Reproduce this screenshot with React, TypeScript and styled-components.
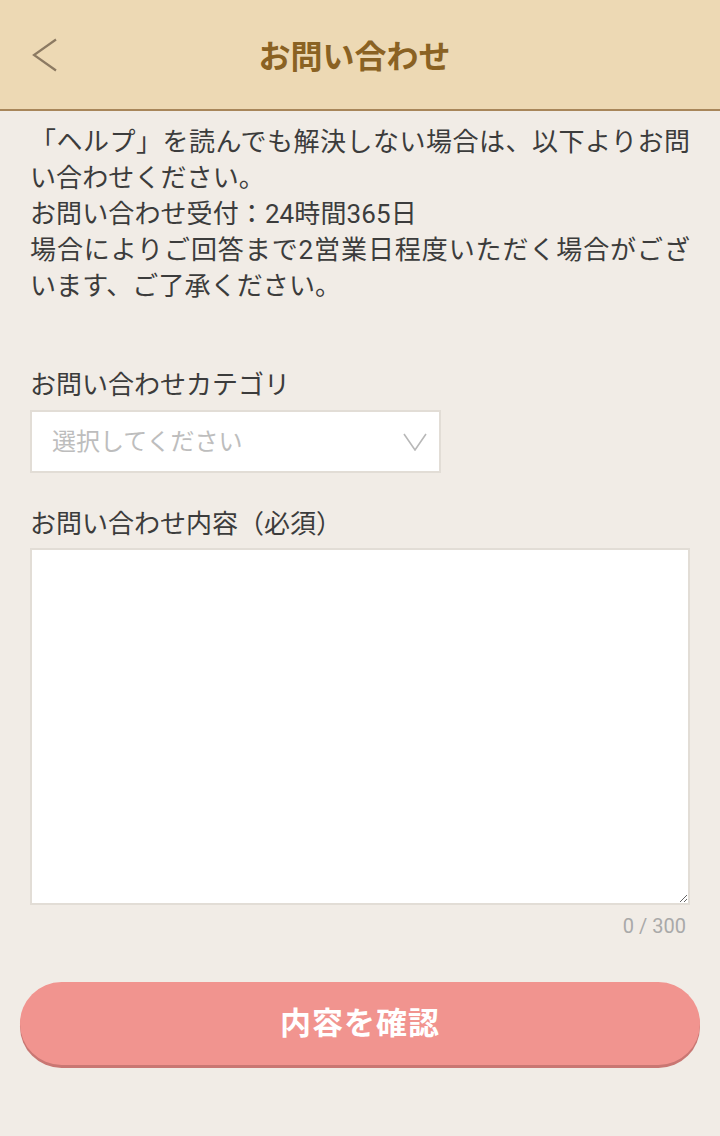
import { useState } from "react";
import { styled, createGlobalStyle } from "styled-components";

const COLOR = {
  bg: "#f1ece6",
  header: "#edd9b4",
  headerLine: "#a8865a",
  title: "#8a6223",
  text: "#3c3c3c",
  placeholder: "#bdbdbd",
  border: "#e2ddd6",
  counter: "#a9a9a9",
  button: "#f1948f",
  buttonShadow: "#c97773",
};

const FONT = `"Roboto", "Noto Sans CJK JP", sans-serif`;

const GlobalStyle = createGlobalStyle`
  html, body {
    margin: 0;
    padding: 0;
    background: ${COLOR.bg};
    font-family: ${FONT};
  }
  * {
    box-sizing: border-box;
  }
`;

const Page = styled.div`
  width: 720px;
  min-height: 1136px;
  background: ${COLOR.bg};
  display: flex;
  flex-direction: column;
`;

const Header = styled.header`
  height: 111px;
  background: ${COLOR.header};
  border-bottom: 2px solid ${COLOR.headerLine};
  display: grid;
  grid-template-columns: 90px 1fr 90px;
  align-items: center;
  .backButton {
    display: flex;
    align-items: center;
    padding-left: 32px;
    background: none;
    border: none;
    cursor: pointer;
    height: 100%;
  }
  .headerTitle {
    margin: 0;
    text-align: center;
    font-size: 32px;
    font-weight: 700;
    color: ${COLOR.title};
    padding: 0 11px 2px 0;
  }
`;

const Content = styled.main`
  padding: 13px 30px 0;
  display: flex;
  flex-direction: column;
`;

const Notice = styled.p`
  margin: 0;
  font-size: 26px;
  line-height: 36px;
  color: ${COLOR.text};
  text-align: justify;
  letter-spacing: 0.1px;
`;

const Label = styled.label<{ $top: number }>`
  display: block;
  margin-top: ${(p) => p.$top}px;
  font-size: 26px;
  line-height: 36px;
  color: ${COLOR.text};
`;

const SelectBox = styled.div`
  position: relative;
  margin-top: 7px;
  width: 411px;
  height: 63px;
  select {
    appearance: none;
    width: 100%;
    height: 100%;
    background: #fff;
    border: 2px solid ${COLOR.border};
    padding: 0 60px 0 20px;
    font-family: ${FONT};
    font-size: 24px;
    color: ${COLOR.placeholder};
    outline: none;
  }
  svg {
    position: absolute;
    right: 14px;
    top: 23px;
    pointer-events: none;
  }
`;

const TextArea = styled.textarea`
  margin-top: 6px;
  width: 660px;
  height: 357px;
  background: #fff;
  border: 2px solid ${COLOR.border};
  font-family: ${FONT};
  font-size: 24px;
  padding: 12px 16px;
  color: ${COLOR.text};
  outline: none;
  resize: vertical;
`;

const Counter = styled.div`
  text-align: right;
  font-size: 20px;
  line-height: 28px;
  margin-top: 7px;
  padding-right: 4px;
  color: ${COLOR.counter};
`;

const ButtonRow = styled.div`
  padding: 42px 20px 0;
`;

const SubmitButton = styled.button`
  width: 680px;
  height: 83px;
  border: none;
  border-radius: 42px;
  background: ${COLOR.button};
  box-shadow: 0 3px 0 ${COLOR.buttonShadow};
  color: #fff;
  font-family: ${FONT};
  font-size: 31px;
  font-weight: 700;
  letter-spacing: 1px;
  padding: 0 0 6px;
  cursor: pointer;
`;

const categories = ["アカウントについて", "お支払いについて", "不具合について", "その他"];

const App = (): JSX.Element => {
  const [body, setBody] = useState("");
  const [category, setCategory] = useState("");
  return (
    <Page>
      <GlobalStyle />
      <Header>
        <button className="backButton" aria-label="戻る">
          <svg width="26" height="34" viewBox="0 0 26 34" fill="none">
            <path d="M24 1.5L2 17L24 32.5" stroke="#8c7a62" strokeWidth="2.2" />
          </svg>
        </button>
        <h1 className="headerTitle">お問い合わせ</h1>
        <div />
      </Header>
      <Content>
        <Notice>
          「ヘルプ」を読んでも解決しない場合は、以下よりお問い合わせください。
          <br />
          お問い合わせ受付：24時間365日
          <br />
          場合によりご回答まで2営業日程度いただく場合がございます、ご了承ください。
        </Notice>
        <Label $top={63}>お問い合わせカテゴリ</Label>
        <SelectBox>
          <select value={category} onChange={(e) => setCategory(e.target.value)}>
            <option value="" disabled>
              選択してください
            </option>
            {categories.map((c) => (
              <option key={c} value={c}>
                {c}
              </option>
            ))}
          </select>
          <svg width="24" height="18" viewBox="0 0 24 18" fill="none">
            <path d="M1 1L12 17L23 1" stroke="#b8b8b8" strokeWidth="1.6" />
          </svg>
        </SelectBox>
        <Label $top={33}>お問い合わせ内容（必須）</Label>
        <TextArea value={body} maxLength={300} onChange={(e) => setBody(e.target.value)} />
        <Counter>{body.length} / 300</Counter>
      </Content>
      <ButtonRow>
        <SubmitButton>内容を確認</SubmitButton>
      </ButtonRow>
    </Page>
  );
};

export default App;
